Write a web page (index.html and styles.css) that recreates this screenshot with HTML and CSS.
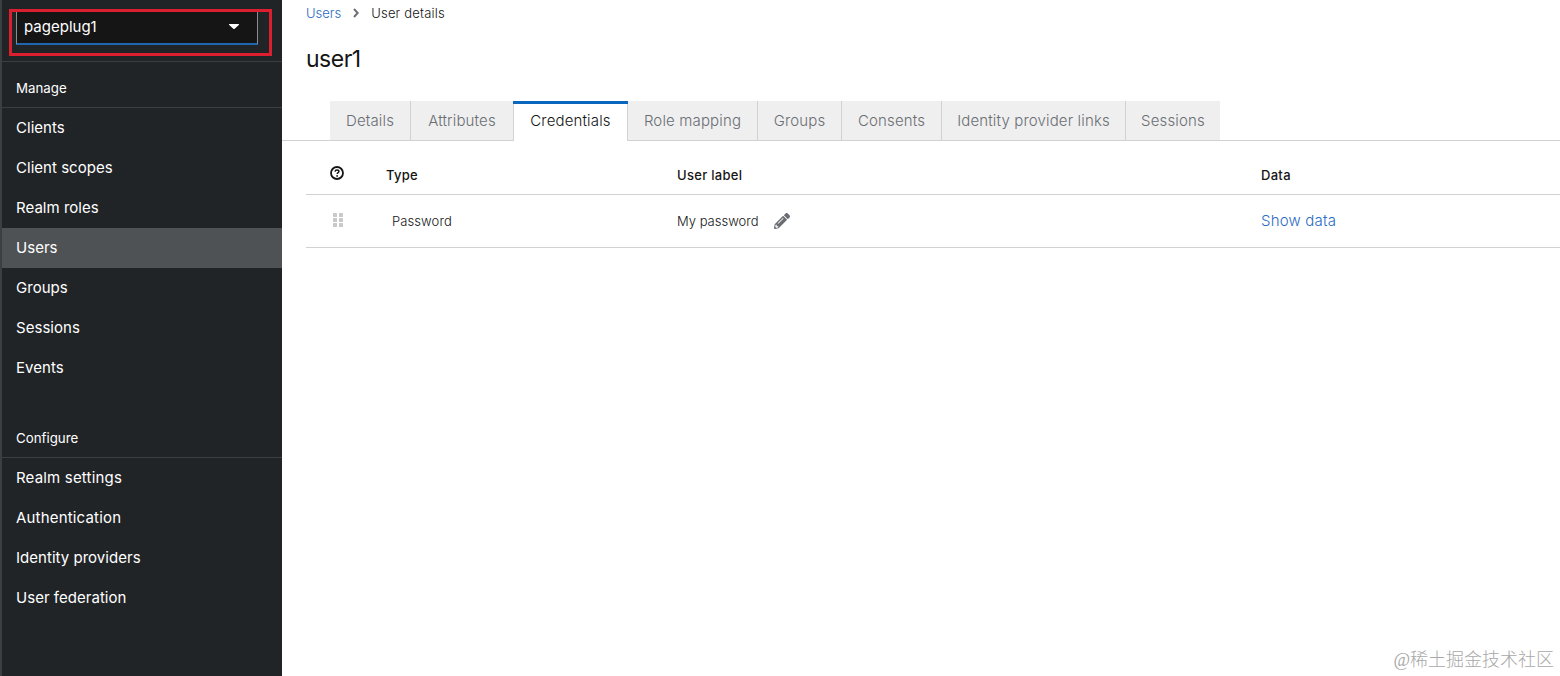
FILE: index.html
```html
<!DOCTYPE html>
<html lang="en">
<head>
  <title>User details</title>
  <meta charset="UTF-8">
  <link rel="stylesheet" href="styles.css">
</head>
<body>
  <div class="page">
    <nav class="sidebar">
      <div class="realm">
        <div class="realm-highlight">
          <button class="realm-toggle">
            <span class="realm-name">pageplug1</span>
            <svg class="caret" width="10" height="5" viewBox="0 0 10 5"><path d="M0.6 0h8.8c.6 0 .8.5.4.9L5.7 4.7c-.4.4-1 .4-1.4 0L.2.9C-.2.5 0 0 .6 0z" fill="#fff"/></svg>
          </button>
        </div>
      </div>

      <section class="nav-section">
        <h2>Manage</h2>
        <ul>
          <li>Clients</li>
          <li>Client scopes</li>
          <li>Realm roles</li>
          <li class="current">Users</li>
          <li>Groups</li>
          <li>Sessions</li>
          <li>Events</li>
        </ul>
      </section>

      <section class="nav-section">
        <h2>Configure</h2>
        <ul>
          <li class="wide">Realm settings</li>
          <li class="wide">Authentication</li>
          <li>Identity providers</li>
          <li>User federation</li>
        </ul>
      </section>
    </nav>

    <main class="content">
      <div class="breadcrumb">
        <a class="link">Users</a>
        <svg width="6" height="10" viewBox="0 0 6 10"><path d="M1 1l3.7 4L1 9" fill="none" stroke="#6a6e73" stroke-width="1.9"/></svg>
        <span class="here">User details</span>
      </div>
      <h1>user1</h1>

      <div class="tabs">
        <a class="tab">Details</a>
        <a class="tab">Attributes</a>
        <a class="tab active">Credentials</a>
        <a class="tab">Role mapping</a>
        <a class="tab">Groups</a>
        <a class="tab">Consents</a>
        <a class="tab">Identity provider links</a>
        <a class="tab">Sessions</a>
      </div>

      <div class="table">
        <div class="row head">
          <svg class="help" width="14" height="14" viewBox="0 0 14 14"><circle cx="7" cy="7" r="6" fill="none" stroke="#151515" stroke-width="1.8"/><path d="M5 5.6C5.2 4.5 6 4.1 7 4.1c1.1 0 1.9.6 1.9 1.5C8.9 6.8 7.200 6.700 7.200 8" fill="none" stroke="#151515" stroke-width="1.5"/><circle cx="7.1" cy="9.9" r=".9" fill="#151515"/></svg>
          <span>Type</span>
          <span>User label</span>
          <span>Data</span>
        </div>
        <div class="row">
          <svg class="grip" width="11" height="14" viewBox="0 0 11 14" fill="#c9c9c9"><rect width="4" height="4" rx=".6"/><rect x="6" width="4" height="4" rx=".6"/><rect y="5" width="4" height="4" rx=".6"/><rect x="6" y="5" width="4" height="4" rx=".6"/><rect y="10" width="4" height="4" rx=".6"/><rect x="6" y="10" width="4" height="4" rx=".6"/></svg>
          <span class="type">Password</span>
          <span class="label">My password
            <svg width="16" height="16" viewBox="0 0 512 512"><path fill="#6a6e73" d="M497.900 142.100l-46.100 46.100c-4.700 4.700-12.300 4.700-17 0l-111-111c-4.700-4.700-4.700-12.300 0-17l46.100-46.100c18.700-18.700 49.100-18.700 67.900 0l60.100 60.100c18.800 18.700 18.800 49.100 0 67.900zM284.200 99.800L21.600 362.400.4 483.900c-2.900 16.400 11.400 30.600 27.800 27.800l121.500-21.300 262.600-262.600c4.700-4.700 4.700-12.300 0-17l-111-111c-4.800-4.700-12.400-4.700-17.100 0zM124.100 339.900c-5.500-5.500-5.500-14.300 0-19.800l154-154c5.500-5.500 14.300-5.500 19.800 0s5.500 14.300 0 19.800l-154 154c-5.500 5.500-14.300 5.500-19.800 0zM88 424h48v36.300l-64.500 11.300-31.100-31.100L51.700 376H88v48z"/></svg>
          </span>
          <a class="link show">Show data</a>
        </div>
      </div>

      <div class="watermark">@稀土掘金技术社区</div>
    </main>
  </div>
</body>
</html>
```
FILE: styles.css
```css
:root {
  --sidebar-bg: #212427;
  --sidebar-line: #3c3f42;
  --text-color: #151515;
  --link-color: #2b6cc4;
  --border-color: #d2d2d2;
}

* {
  box-sizing: border-box;
}

body {
  margin: 0;
  font-family: Inter, "Noto Sans", sans-serif;
  font-size: 15px;
  color: var(--text-color);
  background-color: #fff;
}

h1, h2, ul {
  margin: 0;
  padding: 0;
  font-weight: 400;
}

.page {
  display: flex;
  height: 676px;
  overflow: hidden;
}

/* Sidebar */
.sidebar {
  width: 282px;
  flex-shrink: 0;
  background-color: var(--sidebar-bg);
  border-left: 2px solid var(--sidebar-line);
  color: #fff;
}

.realm {
  height: 62px;
  padding: 9px 0 0 7px;
  border-bottom: 1px solid var(--sidebar-line);
}

.realm-highlight {
  width: 263px;
  height: 47px;
  padding-left: 4px;
  border: 3px solid #dc1f2e;
}

.realm-toggle {
  display: flex;
  align-items: center;
  justify-content: space-between;
  width: 242px;
  height: 33px;
  padding: 0 18px 2px 7px;
  border: 1px solid #8a8d90;
  border-top: none;
  border-bottom: 2px solid #1f66ae;
  background-color: #151515;
  color: #fff;
  font: inherit;
}

.nav-section h2 {
  height: 46px;
  padding-left: 14px;
  border-bottom: 1px solid var(--sidebar-line);
  font-size: 13.3px;
  line-height: 52px;
}

.nav-section ul {
  list-style: none;
}

.nav-section + .nav-section {
  margin-top: 24px;
}

.nav-section li {
  height: 40px;
  padding-left: 14px;
  line-height: 40px;
  letter-spacing: 0.03px;
}

.nav-section .wide {
  letter-spacing: 0.18px;
}

.nav-section .current {
  background-color: #4f5255;
}

/* Main content */
.content {
  flex: 1;
  min-width: 0;
  position: relative;
}

.link {
  color: var(--link-color);
}

.breadcrumb {
  display: flex;
  align-items: center;
  gap: 12px;
  height: 26px;
  padding-left: 24px;
  font-size: 13px;
  font-weight: 300;
}

.here {
  letter-spacing: 0.2px;
}

h1 {
  height: 75px;
  padding: 14px 0 0 24px;
  font-size: 23px;
  line-height: 38px;
  letter-spacing: -0.5px;
}

.tabs {
  display: grid;
  grid-template-columns: 81px 103px 114px 130px 84px 100px 184px 94px;
  grid-template-rows: 39px;
  height: 40px;
  padding-left: 48px;
  border-bottom: 1px solid var(--border-color);
}

.tab {
  border-right: 1px solid var(--border-color);
  background-color: #efefef;
  color: #6a6e73;
  font-weight: 300;
  line-height: 39px;
  letter-spacing: 0.15px;
  text-align: center;
}

.tab:last-child {
  border-right: none;
}

/* covers the line under the tabs, top bar reaches over the left separator */
.tab.active {
  height: 40px;
  background-color: #fff;
  color: var(--text-color);
  position: relative;
}

.tab.active::before {
  content: "";
  position: absolute;
  top: 0;
  left: -1px;
  right: -1px;
  height: 3px;
  background-color: #0b66bd;
}

/* Credentials table */
.table {
  margin-left: 24px;
  font-size: 13px;
}

.row {
  display: grid;
  grid-template-columns: 80px 291px 584px 1fr;
  align-items: center;
  height: 53px;
  border-bottom: 1px solid var(--border-color);
  font-weight: 300;
}

.row.head {
  height: 54px;
  padding-top: 15px;
  font-weight: 500;
  letter-spacing: 0.3px;
}

.help {
  margin: -4px 0 0 24px;
}

.grip {
  margin: -2px 0 0 27px;
}

.type {
  padding-left: 6px;
  letter-spacing: 0.1px;
}

.label {
  display: flex;
  align-items: center;
  gap: 15px;
}

.show {
  margin-top: -2px;
  font-size: 15px;
  letter-spacing: 0.2px;
}

.watermark {
  position: absolute;
  right: 6px;
  bottom: 3px;
  color: #a8a8a8;
  font-family: "Liberation Serif", "Noto Sans CJK SC", sans-serif;
  font-size: 18px;
  font-weight: 300;
  line-height: 26px;
}
```
